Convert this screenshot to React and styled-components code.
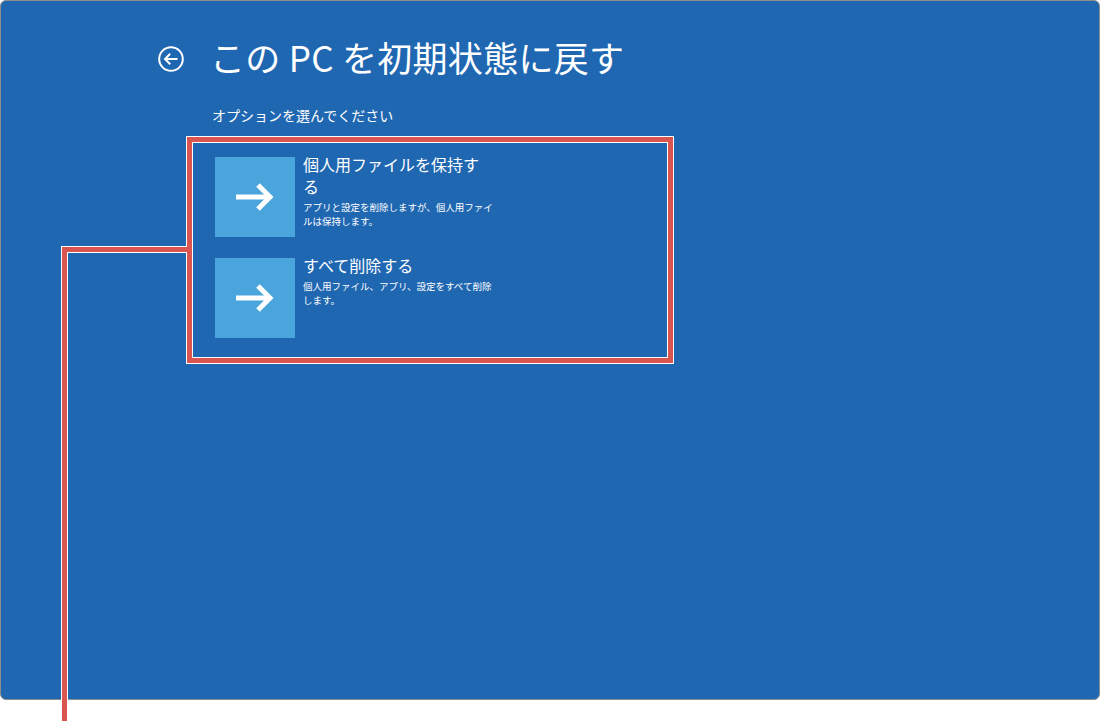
import React from "react";
import styled, { createGlobalStyle } from "styled-components";

const Global = createGlobalStyle`
  html, body { margin: 0; padding: 0; background: #ffffff; }
  body { font-family: "Noto Sans CJK JP", "Noto Sans", sans-serif; }
`;

const Page = styled.div`
  position: relative;
  width: 1100px;
  height: 721px;
  overflow: hidden;
  background: #ffffff;
`;

const Panel = styled.div`
  box-sizing: border-box;
  width: 1100px;
  height: 700px;
  background: #2067b2;
  border: 1px solid #8e8e8e;
  border-radius: 6px;
  padding: 35px 0 0 157px;
  display: flex;
  flex-direction: column;
  color: #ffffff;
`;

const Header = styled.div`
  display: flex;
  align-items: center;
  gap: 26px;
`;

const BackButton = styled.div`
  width: 26px;
  height: 26px;
  display: flex;
  margin-top: 4px;
`;

const Title = styled.h1`
  margin: 0;
  font-size: 35px;
  line-height: 42px;
  font-weight: 400;
  letter-spacing: 0.3px;
`;

const Subtitle = styled.div`
  margin: 27px 0 0 54px;
  font-size: 14px;
  line-height: 20px;
`;

const OptionList = styled.div`
  box-sizing: border-box;
  margin: 12px 0 0 29px;
  width: 486px;
  height: 226px;
  border: 5px solid #da5550;
  outline: 1px solid #ffffff;
  box-shadow: inset 0 0 0 1px #ffffff;
  padding: 15px 0 0 23px;
  display: flex;
  flex-direction: column;
  gap: 21px;
`;

const Option = styled.div`
  display: flex;
  align-items: flex-start;
  gap: 8px;
`;

const Tile = styled.div`
  width: 80px;
  height: 80px;
  flex: none;
  background: #4aa5dc;
  display: flex;
  align-items: center;
  justify-content: center;
`;

const OptionText = styled.div`
  display: flex;
  flex-direction: column;
  margin-top: -4px;
`;

const OptionTitle = styled.div`
  font-size: 16px;
  line-height: 22px;
  white-space: nowrap;
`;

const OptionDesc = styled.div`
  margin-top: 4px;
  font-size: 9.5px;
  line-height: 13.5px;
  white-space: nowrap;
`;

const Callout = styled.svg`
  position: absolute;
  left: 0;
  top: 0;
  pointer-events: none;
`;

const ArrowIcon = () => (
  <svg width="40" height="30" viewBox="0 0 40 30">
    <path d="M1 15 H35" stroke="#fff" strokeWidth="5" fill="none" />
    <path d="M23 3 L35 15 L23 27" stroke="#fff" strokeWidth="5" fill="none" strokeLinejoin="miter" />
  </svg>
);

const BackIcon = () => (
  <svg width="26" height="26" viewBox="0 0 26 26">
    <circle cx="13" cy="13" r="11.8" stroke="#fff" strokeWidth="2" fill="none" />
    <path d="M7 13 H19.5" stroke="#fff" strokeWidth="2" fill="none" />
    <path d="M12.2 7.8 L7 13 L12.2 18.2" stroke="#fff" strokeWidth="2" fill="none" />
  </svg>
);

const options = [
  {
    title: ["個人用ファイルを保持す", "る"],
    desc: ["アプリと設定を削除しますが、個人用ファイ", "ルは保持します。"],
  },
  {
    title: ["すべて削除する"],
    desc: ["個人用ファイル、アプリ、設定をすべて削除", "します。"],
  },
];

export default function App() {
  return (
    <Page>
      <Global />
      <Panel>
        <Header>
          <BackButton>
            <BackIcon />
          </BackButton>
          <Title>この PC を初期状態に戻す</Title>
        </Header>
        <Subtitle>オプションを選んでください</Subtitle>
        <OptionList>
          {options.map((o, i) => (
            <Option key={i}>
              <Tile>
                <ArrowIcon />
              </Tile>
              <OptionText>
                <OptionTitle>
                  {o.title.map((t, j) => (
                    <React.Fragment key={j}>
                      {j > 0 && <br />}
                      {t}
                    </React.Fragment>
                  ))}
                </OptionTitle>
                <OptionDesc>
                  {o.desc.map((t, j) => (
                    <React.Fragment key={j}>
                      {j > 0 && <br />}
                      {t}
                    </React.Fragment>
                  ))}
                </OptionDesc>
              </OptionText>
            </Option>
          ))}
        </OptionList>
      </Panel>
      <Callout width="1100" height="721" viewBox="0 0 1100 721">
        <polyline points="187,249.5 64.5,249.5 64.5,730" stroke="#ffffff" strokeWidth="7" fill="none" strokeLinejoin="miter" />
        <polyline points="187,249.5 64.5,249.5 64.5,730" stroke="#da5550" strokeWidth="5" fill="none" strokeLinejoin="miter" />
      </Callout>
    </Page>
  );
}
